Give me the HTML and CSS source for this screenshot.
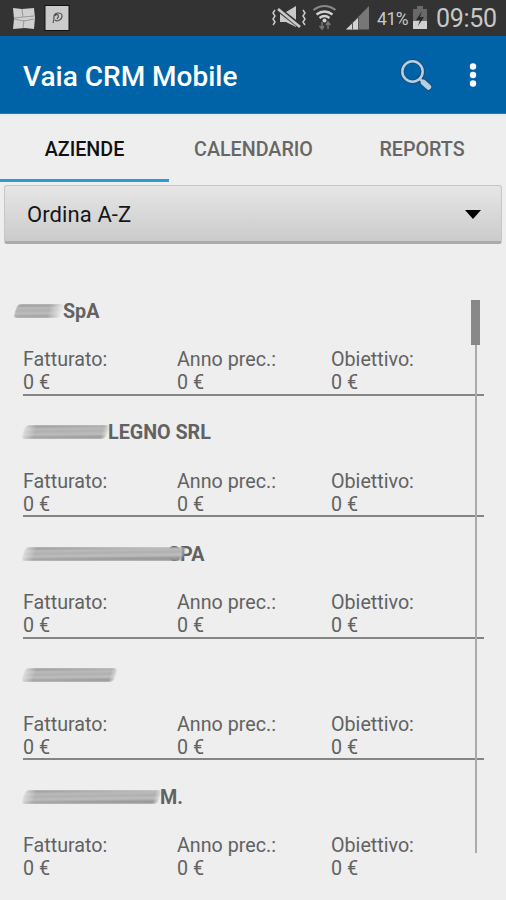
FILE: index.html
```html
<!DOCTYPE html>
<html lang="it">
<head>
<meta charset="utf-8">
<title>Vaia CRM Mobile</title>
<link rel="stylesheet" href="styles.css">
</head>
<body>
<div class="status">
  <svg class="notif" width="72" height="36" viewBox="0 0 72 36">
    <path d="M13 8l9 1 12-1 1 10-1 11-9-1-12 1 1-10z" fill="#cfcfcf"/>
    <path d="M22 9l1 8-9 1M23 17l11-1M14 19l10 2 10-2M24 20l-1 8" fill="none" stroke="#999" stroke-width="1"/>
    <rect x="45" y="5.500" width="24" height="25" fill="#cbcbcb" stroke="#111" stroke-width="1"/>
    <path d="M53 23c1-2 1-4 1-7 1-4 8-4 8 0 0 4-5 6-7 4M55 16c2-4 5 0 2 3" fill="none" stroke="#555" stroke-width="1.200"/>
  </svg>
  <svg class="signals" width="112" height="36" viewBox="0 0 112 36">
    <g fill="none" stroke="#c9c9c9" stroke-width="1.500">
      <path d="M4 10l-2 3 2 3-2 3 2 3-2 3M32 10l2 3-2 3 2 3-2 3 2 3"/>
    </g>
    <path d="M9 12h6l10-6v21l-10-5H9z" fill="#c9c9c9"/>
    <path d="M7 9l23 18" stroke="#333" stroke-width="5"/>
    <path d="M7 9l22 18" stroke="#c9c9c9" stroke-width="2.800"/>
    <path d="M42.500 10q11-8 22 0" fill="none" stroke="#888" stroke-width="2"/>
    <path d="M45.500 14.500q8-6 16 0M48.500 18q5-4 10 0" fill="none" stroke="#d2d2d2" stroke-width="2.300"/>
    <circle cx="53.500" cy="20.500" r="2" fill="#d2d2d2"/>
    <path d="M51 22v7M48.500 26l2.500 3 2-3M57 29v-7M55 25l2-3 2.500 3" fill="none" stroke="#777" stroke-width="1.500"/>
    <path d="M75 29.500h23V6z" fill="#777"/>
    <path d="M75 29.500h12V18z" fill="#d2d2d2"/>
    <path d="M81.500 22v7.500M87.500 16v13.500" stroke="#555" stroke-width="1"/>
  </svg>
  <span class="percent">41%</span>
  <svg class="battery" width="16" height="36" viewBox="0 0 16 36">
    <path d="M1 9h4V6h6v3h4v20H1z" fill="#696969"/>
    <path d="M1 21h14v8H1z" fill="#d0d0d0"/>
    <path d="M10 11l-6 9h4l-2 6 6-9H8z" fill="#292929"/>
  </svg>
  <span class="clock">09:50</span>
</div>
<header class="bar">
  <h1>Vaia CRM Mobile</h1>
  <svg class="search" width="36" height="36" viewBox="0 0 36 36">
    <circle cx="13.500" cy="13.500" r="10.300" fill="none" stroke="#174f7c" stroke-width="4.500"/>
    <path d="M21 21l8.500 8" stroke="#174f7c" stroke-width="7.500" stroke-linecap="round"/>
    <circle cx="13.500" cy="13.500" r="10.200" fill="none" stroke="#b5d0e4" stroke-width="2.500"/>
    <path d="M20.500 20.500l4 4" stroke="#b5d0e4" stroke-width="2.500"/>
    <path d="M24.500 24.500l5 4.500" stroke="#b5d0e4" stroke-width="5.500" stroke-linecap="round"/>
  </svg>
  <svg class="more" width="8" height="26" viewBox="0 0 8 26" fill="#fff">
    <circle cx="4" cy="4.500" r="3.200"/><circle cx="4" cy="13" r="3.200"/><circle cx="4" cy="21.500" r="3.200"/>
  </svg>
</header>
<nav class="tabs">
  <span class="tab active">AZIENDE</span>
  <span class="tab">CALENDARIO</span>
  <span class="tab">REPORTS</span>
</nav>
<div class="select"><span>Ordina A-Z</span><i class="arrow"></i></div>
<main class="list">
  <section class="row">
    <h2 class="first"><i class="smudge s1"></i>SpA</h2>
    <dl><div><dt>Fatturato:</dt><dd>0 €</dd></div><div><dt>Anno prec.:</dt><dd>0 €</dd></div><div><dt>Obiettivo:</dt><dd>0 €</dd></div></dl>
  </section>
  <section class="row">
    <h2><i class="smudge s2"></i>LEGNO SRL</h2>
    <dl><div><dt>Fatturato:</dt><dd>0 €</dd></div><div><dt>Anno prec.:</dt><dd>0 €</dd></div><div><dt>Obiettivo:</dt><dd>0 €</dd></div></dl>
  </section>
  <section class="row">
    <h2><i class="smudge s3"></i>SPA</h2>
    <dl><div><dt>Fatturato:</dt><dd>0 €</dd></div><div><dt>Anno prec.:</dt><dd>0 €</dd></div><div><dt>Obiettivo:</dt><dd>0 €</dd></div></dl>
  </section>
  <section class="row">
    <h2><i class="smudge s4"></i></h2>
    <dl><div><dt>Fatturato:</dt><dd>0 €</dd></div><div><dt>Anno prec.:</dt><dd>0 €</dd></div><div><dt>Obiettivo:</dt><dd>0 €</dd></div></dl>
  </section>
  <section class="row last">
    <h2><i class="smudge s5"></i>M.</h2>
    <dl><div><dt>Fatturato:</dt><dd>0 €</dd></div><div><dt>Anno prec.:</dt><dd>0 €</dd></div><div><dt>Obiettivo:</dt><dd>0 €</dd></div></dl>
  </section>
  <div class="track"><div class="thumb"></div></div>
</main>
</body>
</html>
```
FILE: styles.css
```css
* { box-sizing: border-box; }
body { margin: 0; height: 900px; overflow: hidden; background: #eee; font-family: Roboto, sans-serif; color: #626262; }
h1, h2, dl, dd { margin: 0; }
svg { display: block; flex: none; }
.status { height: 36px; background: #333; display: flex; align-items: center; color: #c8c8c8; }
.signals { margin-left: 199px; }
.percent { width: 35px; margin-left: -6px; font-size: 17.500px; letter-spacing: -.4px; line-height: 38px; padding-top: 2px; }
.clock { margin-left: 8px; font-size: 25px; line-height: 40px; letter-spacing: -.3px; padding-top: 2px; white-space: nowrap; }
.bar { height: 78px; background: #0063a8; display: flex; align-items: center; padding-left: 23px; border-bottom: 1px solid #2c78b2; }
.bar h1 { width: 376px; color: #fff; font-size: 28px; font-weight: 500; line-height: 36px; padding-top: 4px; }
.search { margin-top: 3px; }
.more { margin-left: 34px; }
.tabs { height: 68px; border-top: 2px solid #e4ebf8; display: grid; grid-template-columns: 169px 169px 168px; }
.tab { height: 66px; text-align: center; font-size: 19.700px; line-height: 68px; font-weight: 500; color: #666; }
.active { color: #111; background: linear-gradient(#2b9bd7, #2b9bd7) 0 63px / 100% 3px no-repeat; }
.select { margin: 3px 4px 0; height: 59px; border: 1px solid #c6c6c6; border-bottom: 3px solid #aaa; border-radius: 3px; background: linear-gradient(#e6e6e6, #cbcbcb); display: flex; align-items: center; justify-content: space-between; padding: 2px 20px 0 22px; font-size: 22px; letter-spacing: .1px; color: #161616; }
.arrow { border: 8px solid transparent; border-top: 9px solid #000; border-bottom: 0; }
.list { position: relative; margin: 30.600px 22px 0 23px; }
.row { height: 121.400px; padding-top: 24.400px; border-bottom: 2px solid #858585; }
.last { border-bottom-color: transparent; }
.row h2 { height: 49.500px; display: flex; font-size: 19.700px; line-height: 26px; font-weight: 700; white-space: nowrap; }
.row .first { margin-left: -8px; }
.row dl { display: grid; grid-template-columns: 154px 154px 1fr; font-size: 19.700px; line-height: 23px; }
.smudge { flex: none; height: 14px; margin-top: 5px; border-radius: 4px; transform: skewX(-18deg); filter: blur(1.200px); background: linear-gradient(179.200deg, #8c8c8c 0 1px, #c4c4c4 4px, #a8a8a8 7px, #c8c8c8 10px, #929292 13px); -webkit-mask: linear-gradient(90deg, rgba(0, 0, 0, .3), #000 12px calc(100% - 6px), rgba(0, 0, 0, .3)); mask: linear-gradient(90deg, rgba(0, 0, 0, .3), #000 12px calc(100% - 6px), rgba(0, 0, 0, .3)); }
.s1 { width: 48px; -webkit-mask: linear-gradient(90deg, #000 70%, transparent); mask: linear-gradient(90deg, #000 70%, transparent); }
.s2 { width: 85px; }
.s3 { width: 162px; margin-right: -17px; z-index: 1; }
.s4 { width: 93px; }
.s5 { width: 137px; }
.track { position: absolute; top: 25.400px; left: 452px; width: 2px; height: 553px; background: #aaa; }
.thumb { width: 9px; height: 45px; margin-left: -4px; background: #888; }
```
